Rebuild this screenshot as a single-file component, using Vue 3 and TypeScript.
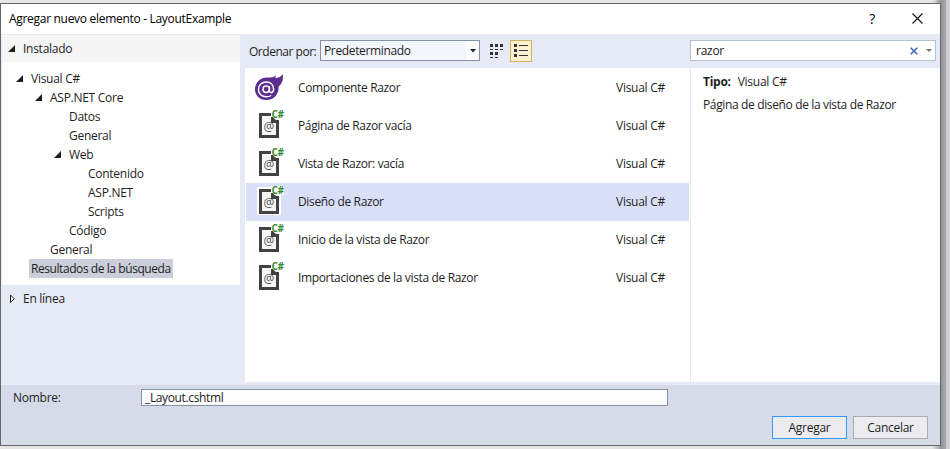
<script setup lang="ts">
interface Node { label: string; level: number; open?: boolean; selected?: boolean }
interface Item { name: string; kind: 'blazor' | 'razor'; selected?: boolean }

const nodes: Node[] = [
  { label: 'Visual C#', level: 0, open: true },
  { label: 'ASP.NET Core', level: 1, open: true },
  { label: 'Datos', level: 2 },
  { label: 'General', level: 2 },
  { label: 'Web', level: 2, open: true },
  { label: 'Contenido', level: 3 },
  { label: 'ASP.NET', level: 3 },
  { label: 'Scripts', level: 3 },
  { label: 'Código', level: 2 },
  { label: 'General', level: 1 },
  { label: 'Resultados de la búsqueda', level: 0, selected: true },
]

const items: Item[] = [
  { name: 'Componente Razor', kind: 'blazor' },
  { name: 'Página de Razor vacía', kind: 'razor' },
  { name: 'Vista de Razor: vacía', kind: 'razor' },
  { name: 'Diseño de Razor', kind: 'razor', selected: true },
  { name: 'Inicio de la vista de Razor', kind: 'razor' },
  { name: 'Importaciones de la vista de Razor', kind: 'razor' },
]
</script>

<template>
  <div class="desktop">
    <div class="dialog">
      <header class="titlebar">
        <span class="title">Agregar nuevo elemento - LayoutExample</span>
        <span class="help">?</span>
        <svg class="close" width="11" height="11" viewBox="0 0 11 11"><path d="M.5 .5l10 10M10.500 .5l-10 10" stroke="#111" stroke-width="1.1" /></svg>
      </header>

      <div class="main">
        <aside class="sidebar">
          <div class="group installed">
            <svg class="arrow" width="7" height="7" viewBox="0 0 7 7"><path d="M7 0v7H0z" fill="#1e1e1e" /></svg>
            <span>Instalado</span>
          </div>
          <div class="tree">
            <div v-for="(n, i) in nodes" :key="i" class="node" :class="'level' + n.level">
              <span class="toggle">
                <svg v-if="n.open" width="7" height="7" viewBox="0 0 7 7"><path d="M7 0v7H0z" fill="#1e1e1e" /></svg>
              </span>
              <span class="label" :class="{ selected: n.selected }">{{ n.label }}</span>
            </div>
          </div>
          <div class="group online">
            <svg class="arrow" width="7" height="10" viewBox="0 0 7 10"><path d="M2.500 1v7.500L6.200 4.750z" fill="#fff" stroke="#1e1e1e" /></svg>
            <span>En línea</span>
          </div>
        </aside>

        <section class="content">
          <div class="toolbar">
            <span class="sort-label">Ordenar por:</span>
            <div class="combo">
              <span>Predeterminado</span>
              <i class="drop"><svg width="6" height="4" viewBox="0 0 6 4"><path d="M0 0h6L3 3.500z" fill="#1b293e" /></svg></i>
            </div>
            <svg class="grid-icon" width="14" height="14" viewBox="0 0 14 14" fill="#333337" shape-rendering="crispEdges">
              <path d="M0 0h3v3H0zM5 0h3v3H5zM10 0h3v3h-3zM0 5h3v1H0zM5 5h3v1H5zM10 5h3v1h-3zM0 8h3v3H0zM5 8h3v3H5zM0 13h3v1H0zM5 13h3v1H5z" />
            </svg>
            <div class="view-button">
              <svg width="14" height="14" viewBox="0 0 14 14" fill="#333337" shape-rendering="crispEdges">
                <path d="M0 0h3v3H0zM5 1h9v1H5zM0 5h3v3H0zM5 6h9v1H5zM0 10h3v3H0zM5 11h9v1H5z" />
              </svg>
            </div>
            <div class="search">
              <span>razor</span>
              <svg class="clear" width="8" height="8" viewBox="0 0 8 8"><path d="M.7 .7l6.600 6.600M7.300 .7L.7 7.300" stroke="#4468b8" stroke-width="1.600" /></svg>
              <i class="search-drop"><svg width="6" height="3" viewBox="0 0 6 3"><path d="M0 0h6L3 3z" fill="#717171" /></svg></i>
            </div>
          </div>

          <div class="panes">
            <div class="list">
              <div v-for="it in items" :key="it.name" class="item" :class="{ active: it.selected }">
                <svg v-if="it.kind === 'blazor'" class="icon" width="34" height="36" viewBox="0 -2 34 36">
                  <path d="M29.700 2c.8 5.500-.2 9.300-4 12.500.2 7.500-4.500 13.500-12.200 13.500C6.500 28 2 23.500 2 17.300 2 10.200 7.500 5.500 14.500 5.500c3.500 0 6.500-.3 8.500-2.300-.2 1.400-.5 2.200-1 3C25.500 6 28.300 4.800 29.700 2z" fill="#5c2d91" />
                  <circle cx="13.200" cy="17.300" r="3.200" fill="none" stroke="#fff" stroke-width="1.500" />
                  <path d="M16.500 14v4.500c0 3.300 4.100 2.500 4.100-1.300 0-4.400-3-7.200-7.200-7.200-4.600 0-7.900 3.100-7.900 7.500s3.300 7.300 7.600 7.300c2.200 0 3.800-.5 5.200-1.300" fill="none" stroke="#fff" stroke-width="1.400" />
                </svg>
                <svg v-else class="icon" width="34" height="36" viewBox="0 -2 34 36">
                  <path v-if="it.selected" d="M4 1h14V0h13v9h-3v20H4z" fill="#fff" />
                  <path d="M9 6h9v5h5v14H9z" fill="#f5f5f5" />
                  <path d="M6 3h12v3H9v19h14V13h-5V7h2l3 3h3v18H6z" fill="#424242" />
                  <text x="16" y="21" class="at">@</text>
                  <path d="M18 1h12v8h-8l-3-3h-1z" fill="#fff" />
                  <text x="18.500" y="8" class="cs">C#</text>
                </svg>
                <span class="item-name">{{ it.name }}</span>
                <span class="language">Visual C#</span>
              </div>
            </div>
            <div class="details">
              <p><b>Tipo:</b><span>Visual C#</span></p>
              <p class="description">Página de diseño de la vista de Razor</p>
            </div>
          </div>
        </section>
      </div>

      <footer class="footer">
        <div class="name-row">
          <span class="name-label">Nombre:</span>
          <div class="name-input">_Layout.cshtml</div>
        </div>
        <div class="buttons">
          <button class="primary">Agregar</button>
          <button>Cancelar</button>
        </div>
      </footer>
    </div>
  </div>
</template>

<style>
body { overflow: hidden; }
</style>

<style scoped>
* { box-sizing: border-box; }
.desktop { width: 950px; height: 449px; padding-top: 3px; background: linear-gradient(90deg, #e6e6e6 0 932px, #c8c8cc 936px, #929299 941px, #aaaab1 946px, #cfcfd4 946px); font: 12px/16px "Open Sans", "Noto Sans", sans-serif; letter-spacing: -.27px; color: #1e1e1e; white-space: nowrap; }
.dialog { width: 941px; height: 443px; border: 1px solid #65656c; background: #e6eaf5; display: flex; flex-direction: column; }
.titlebar { height: 30px; flex: none; background: #fff; display: flex; align-items: center; padding: 0 17px 0 8px; color: #000; }
.title { flex: 1; letter-spacing: -.3px; }
.help { font-size: 14px; margin-right: 37px; }
.close { margin-bottom: 2px; }
.main { height: 351px; display: flex; }
.sidebar { width: 239px; flex: none; padding: 1px 0 0 1px; }
.group { display: flex; align-items: center; padding-left: 6px; gap: 8px; }
.arrow { flex: none; }
.installed { height: 27px; background: #f5f5f5; }
.online { height: 27px; }
.tree { height: 223px; padding-top: 7px; background: #fff; }
.node { height: 19px; display: flex; align-items: center; padding-left: 14px; }
.level1 { padding-left: 33px; }
.level2 { padding-left: 52px; }
.level3 { padding-left: 71px; }
.toggle { width: 13px; display: flex; }
.label { height: 19px; line-height: 19px; padding: 0 2px; }
.selected { background: #cccedb; letter-spacing: -.43px; }
.content { flex: 1; margin-left: 5px; }
.toolbar { height: 34px; display: flex; align-items: center; padding-left: 4px; }
.sort-label { width: 71px; padding-top: 1px; letter-spacing: -.48px; }
.combo { width: 160px; height: 21px; border: 1px solid #8591a9; background: #f3f6fd; display: flex; justify-content: space-between; padding-left: 3px; line-height: 19px; margin-bottom: 1px; letter-spacing: -.36px; }
.drop { width: 13px; background: #fcfcfc; display: grid; place-items: center; }
.grid-icon { margin-left: 10px; }
.view-button { width: 22px; height: 22px; margin-left: 6px; border: 1px solid #d8af66; background: #fdf1cf; display: grid; place-items: center; }
.search { width: 246px; height: 21px; margin: 0 0 1px 158px; border: 1px solid #b4c0d0; background: #fff; display: flex; align-items: center; padding-left: 5px; }
.clear { margin-left: auto; margin-right: 5px; }
.search-drop { width: 12px; display: grid; place-items: center; }
.panes { height: 314px; display: flex; background: #fff; }
.list { width: 445px; padding: 1px 1px 0; }
.item { height: 38px; display: flex; align-items: center; padding-left: 7px; }
.active { background: #dadff8; }
.icon { flex: none; }
.at { font: 12px "Open Sans", sans-serif; fill: #555; text-anchor: middle; letter-spacing: 0; }
.cs { font: bold 10px "Open Sans", sans-serif; fill: #388a34; letter-spacing: -.4px; }
.item-name { width: 318px; margin-left: 11px; letter-spacing: -.35px; }
.details { flex: 1; border-left: 1px solid #e6eaf5; padding: 6px 12px; }
.details p { margin: 0 0 7px; }
.details b { margin-right: 7px; }
.details .description { letter-spacing: -.36px; }
.footer { flex: 1; background: #d6dbe9; padding: 4px 12px; }
.name-row { display: flex; align-items: center; }
.name-label { width: 128px; }
.name-input { width: 527px; height: 17px; border: 1px solid #8591a9; background: #fcfcfc; line-height: 15px; padding-left: 3px; letter-spacing: -.36px; }
.buttons { display: flex; justify-content: flex-end; gap: 6px; margin-top: 10px; }
button { width: 75px; height: 23px; border: 1px solid #acacac; background: #ececf0; font: inherit; letter-spacing: inherit; color: inherit; padding: 0; }
.primary { border-color: #3399ff; }
</style>
